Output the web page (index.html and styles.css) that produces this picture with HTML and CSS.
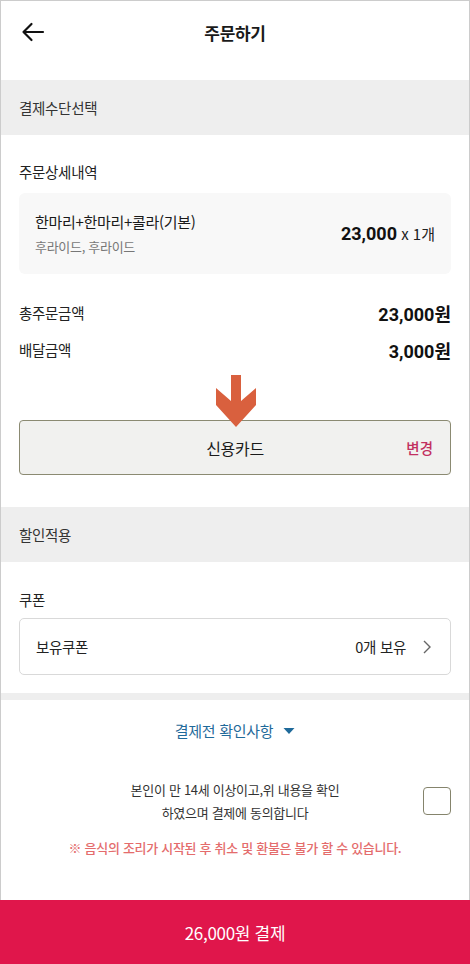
FILE: index.html
```html
<!DOCTYPE html>
<html lang="ko">
<head>
<meta charset="utf-8">
<title>주문하기</title>
<link rel="stylesheet" href="styles.css">
</head>
<body>
<div class="page">
  <header class="header">
    <svg class="back" width="24" height="20" viewBox="0 0 24 20" aria-hidden="true">
      <path d="M2.5 10 H22 M10.5 2 L2.5 10 L10.5 18" fill="none" stroke="#111" stroke-width="2.2" stroke-linecap="round" stroke-linejoin="round"/>
    </svg>
    <h1 class="title">주문하기</h1>
  </header>

  <div class="band">결제수단선택</div>

  <section class="order">
    <h2 class="label">주문상세내역</h2>
    <div class="item-card">
      <div class="item-info">
        <div class="item-name">한마리+한마리+콜라(기본)</div>
        <div class="item-opt">후라이드, 후라이드</div>
      </div>
      <div class="item-price"><strong>23,000</strong> x 1개</div>
    </div>
    <div class="sums">
      <div class="sum-row"><span>총주문금액</span><strong>23,000원</strong></div>
      <div class="sum-row"><span>배달금액</span><strong>3,000원</strong></div>
    </div>

    <div class="pay-wrap">
      <svg class="pay-arrow" width="42" height="53" viewBox="0 0 42 53" aria-hidden="true">
        <path d="M16 0 H26 V26 L41 13 V30 L21 52 L1 30 V13 L16 26 Z" fill="#d9603e"/>
      </svg>
      <div class="pay-box">
        <span class="pay-name">신용카드</span>
        <span class="pay-change">변경</span>
      </div>
    </div>
  </section>

  <div class="band">할인적용</div>

  <section class="coupon">
    <h2 class="label">쿠폰</h2>
    <div class="coupon-box">
      <span>보유쿠폰</span>
      <span class="coupon-right">0개 보유
        <svg width="10" height="16" viewBox="0 0 10 16" aria-hidden="true"><path d="M2 2 L8 8 L2 14" fill="none" stroke="#666" stroke-width="1.4"/></svg>
      </span>
    </div>
  </section>

  <div class="thin-band"></div>

  <section class="confirm">
    <div class="confirm-toggle">결제전 확인사항
      <svg width="12" height="8" viewBox="0 0 12 8" aria-hidden="true"><path d="M0.5 1 H11.5 L6 7 Z" fill="#1f6a9a"/></svg>
    </div>
    <div class="agree">
      <p class="agree-text">본인이 만 14세 이상이고,위 내용을 확인<br>하였으며 결제에 동의합니다</p>
      <span class="checkbox"></span>
    </div>
    <p class="notice">※ 음식의 조리가 시작된 후 취소 및 환불은 불가 할 수 있습니다.</p>
  </section>

  <button class="pay-btn">26,000원 결제</button>
</div>
</body>
</html>
```

FILE: styles.css
```css
* { box-sizing: border-box; }
html, body { margin: 0; padding: 0; background: #fff; }
body {
  font-family: "Noto Sans CJK KR", "Noto Sans", sans-serif;
  color: #222;
  width: 470px;
  height: 964px;
  overflow: hidden;
}
.page {
  width: 470px;
  height: 964px;
  border: 1px solid #cccccc;
  border-bottom: none;
  display: flex;
  flex-direction: column;
}
.header {
  height: 79px;
  display: flex;
  align-items: center;
  justify-content: center;
  position: relative;
  padding-bottom: 17px;
}
.back { position: absolute; left: 20px; top: 21px; }
.title {
  margin: 0;
  font-size: 17px;
  font-weight: 700;
  color: #1a1a1a;
  letter-spacing: -0.3px;
}
.band {
  height: 55px;
  background: #eeeeee;
  display: flex;
  align-items: center;
  padding-left: 18px;
  font-size: 14.5px;
  color: #333;
  letter-spacing: -0.3px;
}
.label {
  margin: 0;
  font-size: 14.5px;
  font-weight: 400;
  color: #222;
  line-height: 20px;
  letter-spacing: -0.3px;
}
.order { padding: 27px 18px 32px; }
.item-card {
  margin-top: 11px;
  height: 81px;
  background: #f8f8f8;
  border-radius: 6px;
  display: flex;
  align-items: center;
  justify-content: space-between;
  padding: 0 16px 0 16px;
}
.item-name { font-size: 15px; color: #1a1a1a; line-height: 20px; letter-spacing: -0.3px; }
.item-opt { font-size: 13px; color: #777; line-height: 18px; margin-top: 6px; letter-spacing: -0.3px; }
.item-price { font-size: 15px; color: #222; }
.item-price strong { font-family: Roboto, "Noto Sans CJK KR", sans-serif; font-size: 18px; font-weight: 700; color: #111; }
.sums { margin-top: 20px; }
.sum-row {
  display: flex;
  justify-content: space-between;
  align-items: center;
  height: 37px;
  font-size: 14.5px;
  letter-spacing: -0.3px;
}
.sum-row strong {
  font-family: Roboto, "Noto Sans CJK KR", sans-serif;
  font-size: 18px;
  font-weight: 700;
  color: #111;
  letter-spacing: 0;
}
.pay-wrap { position: relative; padding-top: 52px; }
.pay-arrow { position: absolute; left: 196px; top: 7px; z-index: 2; }
.pay-box {
  height: 55px;
  border: 1.5px solid #8b8a72;
  border-radius: 4px;
  background: #f1f1ef;
  display: flex;
  align-items: center;
  justify-content: center;
  position: relative;
}
.pay-name { font-size: 16px; color: #1a1a1a; letter-spacing: -0.3px; }
.pay-change {
  position: absolute;
  right: 17px;
  font-size: 14.5px;
  color: #c2305f;
  font-weight: 500;
}
.coupon { padding: 28px 18px 18px; }
.coupon-box {
  margin-top: 8px;
  height: 57px;
  border: 1px solid #d9d9d9;
  border-radius: 5px;
  display: flex;
  align-items: center;
  justify-content: space-between;
  padding: 0 18px 0 16px;
  font-size: 14.5px;
  letter-spacing: -0.3px;
}
.coupon-right { display: flex; align-items: center; gap: 16px; }
.thin-band { height: 7px; background: #eeeeee; }
.confirm {
  display: flex;
  flex-direction: column;
  align-items: center;
  padding-top: 21px;
  flex: 1;
}
.confirm-toggle {
  display: flex;
  align-items: center;
  gap: 10px;
  font-size: 15px;
  color: #1f6a9a;
  letter-spacing: -0.3px;
  line-height: 20px;
}
.agree {
  width: 100%;
  display: flex;
  align-items: center;
  padding: 0 18px 0 0;
  margin-top: 37px;
}
.agree-text {
  flex: 1;
  margin: 0;
  text-align: center;
  font-size: 13px;
  line-height: 23px;
  color: #333;
  letter-spacing: -0.3px;
  padding-left: 66px;
}
.checkbox {
  width: 28px;
  height: 28px;
  border: 1.5px solid #85846c;
  border-radius: 4px;
  margin-left: 20px;
}
.notice {
  margin: 14px 0 0;
  font-size: 13px;
  color: #e46c6c;
  letter-spacing: -0.3px;
  line-height: 20px;
  font-weight: 500;
}
.pay-btn {
  margin: 0 -1px;
  height: 64px;
  width: 470px;
  border: none;
  background: #e0164b;
  color: #fff;
  font-family: inherit;
  font-size: 17px;
  letter-spacing: -0.3px;
  flex-shrink: 0;
}
```
